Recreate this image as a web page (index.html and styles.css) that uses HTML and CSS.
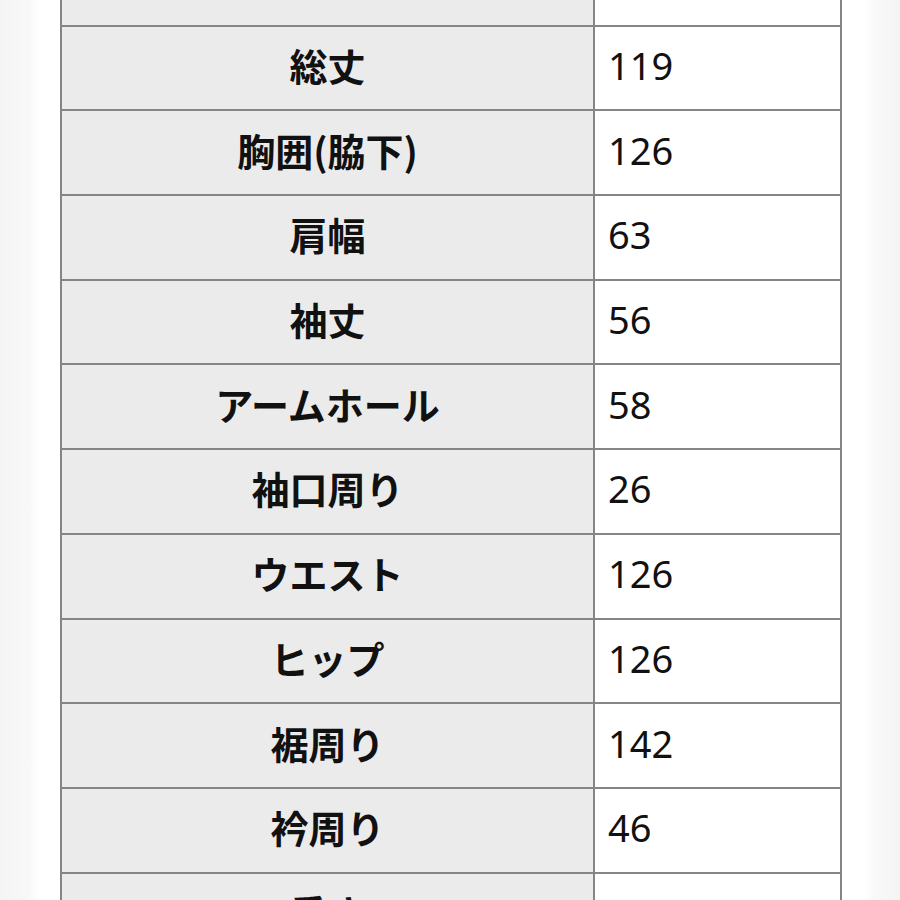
FILE: index.html
```html
<!DOCTYPE html>
<html lang="ja">
<head>
<meta charset="utf-8">
<link rel="stylesheet" href="styles.css">
</head>
<body>
<div class="page">
  <table class="size-table">
    <tbody>
      <tr><th class="label"></th><td class="value"></td></tr>
      <tr><th class="label">総丈</th><td class="value">119</td></tr>
      <tr><th class="label">胸囲(脇下)</th><td class="value">126</td></tr>
      <tr><th class="label">肩幅</th><td class="value">63</td></tr>
      <tr><th class="label">袖丈</th><td class="value">56</td></tr>
      <tr><th class="label">アームホール</th><td class="value">58</td></tr>
      <tr><th class="label">袖口周り</th><td class="value">26</td></tr>
      <tr><th class="label">ウエスト</th><td class="value">126</td></tr>
      <tr><th class="label">ヒップ</th><td class="value">126</td></tr>
      <tr><th class="label">裾周り</th><td class="value">142</td></tr>
      <tr><th class="label">衿周り</th><td class="value">46</td></tr>
      <tr><th class="label">重さ</th><td class="value">770</td></tr>
    </tbody>
  </table>
</div>
</body>
</html>
```
FILE: styles.css
```css
html, body {
  margin: 0;
  padding: 0;
  height: 100%;
  overflow: hidden;
}
body {
  background: linear-gradient(to right, #f4f4f4 0px, #f8f8f8 28px, #ffffff 40px, #ffffff 864px, #f9f9f9 874px, #f4f4f4 900px);
  font-family: "Noto Sans", "Noto Sans CJK JP", sans-serif;
  color: #111;
}
.page {
  padding-left: 60px;
  width: 782px;
}
.size-table {
  width: 782px;
  border-collapse: collapse;
  margin-top: -60px;
  table-layout: fixed;
}
.size-table tr {
  height: 84.7px;
}
.label, .value {
  border: 2px solid #858585;
  line-height: 1;
  padding: 0 0 6px 0;
  vertical-align: middle;
}
.label {
  width: 531px;
  background: #ebebeb;
  font-family: "Noto Sans CJK JP", sans-serif;
  font-size: 38px;
  font-weight: 700;
  text-align: center;
}
.value {
  background: #ffffff;
  text-align: left;
  padding-left: 13px;
  font-size: 38px;
  font-weight: 400;
}
```
